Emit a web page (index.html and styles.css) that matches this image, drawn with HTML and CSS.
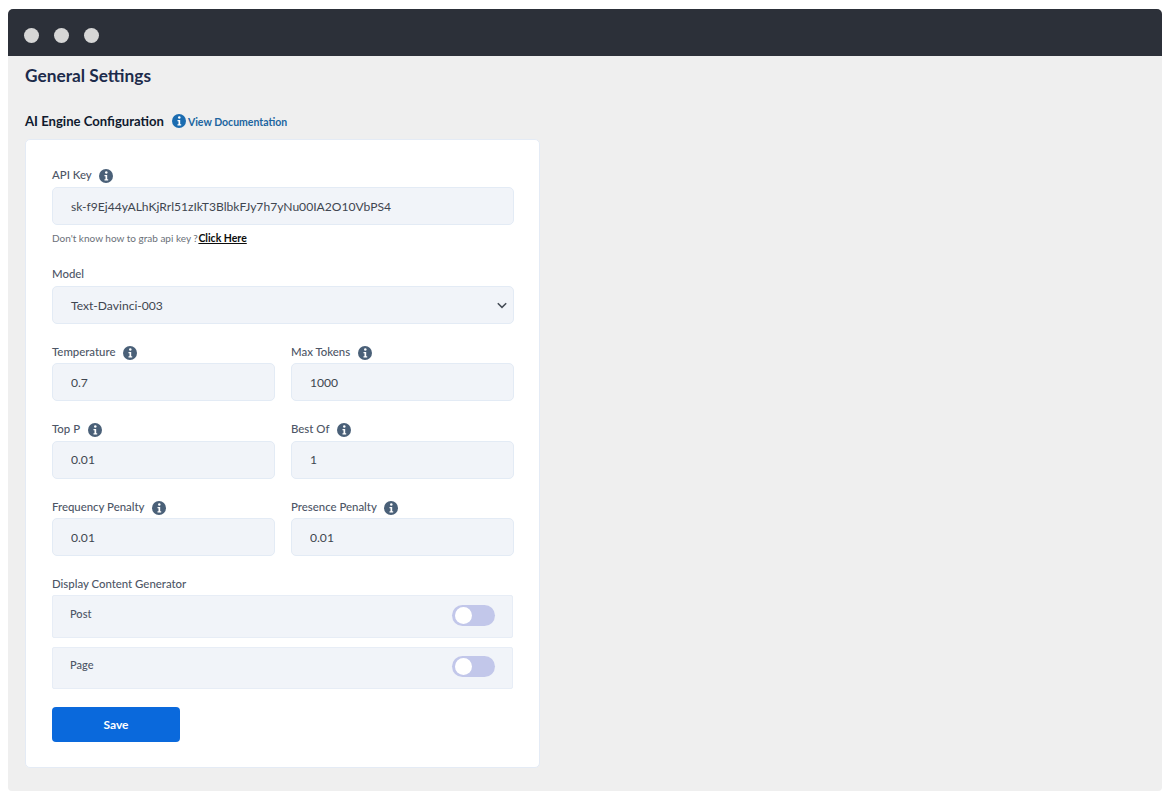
FILE: index.html
```html
<!DOCTYPE html>
<html lang="en">
<head>
<meta charset="utf-8">
<title>General Settings</title>
<link rel="stylesheet" href="styles.css">
</head>
<body>
<svg class="defs" width="0" height="0" aria-hidden="true">
  <symbol id="info" viewBox="0 0 14 14">
    <circle cx="7" cy="7" r="7" fill="currentColor"/>
    <circle cx="7.3" cy="3.6" r="1.25" fill="#fff"/>
    <path d="M5.5 6h2.7v4.2h1v1.2H5.5v-1.2h1V7.2h-1z" fill="#fff"/>
  </symbol>
</svg>
<div class="window">
  <header class="titlebar">
    <span class="dot"></span><span class="dot"></span><span class="dot"></span>
  </header>
  <main class="content">
    <h1 class="page-title">General Settings</h1>
    <div class="section-head">
      <h2 class="section-title">AI Engine Configuration</h2>
      <svg class="doc-icon"><use href="#info"/></svg>
      <a class="doc-link" href="#">View Documentation</a>
    </div>
    <section class="card">
      <div class="field">
        <label class="label">API Key <svg class="tip"><use href="#info"/></svg></label>
        <input class="input" type="text" value="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">
        <p class="help">Don't know how to grab api key ? <a href="#">Click Here</a></p>
      </div>
      <div class="field field-model">
        <label class="label">Model</label>
        <div class="select">
          <span>Text-Davinci-003</span>
          <svg class="chevron" viewBox="0 0 10 7"><path d="M.8 1.2 5 5.4l4.2-4.2" fill="none" stroke="#444b55" stroke-width="1.5"/></svg>
        </div>
      </div>
      <div class="grid">
        <div class="field">
          <label class="label">Temperature <svg class="tip"><use href="#info"/></svg></label>
          <input class="input" type="text" value="0.7">
        </div>
        <div class="field">
          <label class="label">Max Tokens <svg class="tip"><use href="#info"/></svg></label>
          <input class="input" type="text" value="1000">
        </div>
        <div class="field">
          <label class="label">Top P <svg class="tip"><use href="#info"/></svg></label>
          <input class="input" type="text" value="0.01">
        </div>
        <div class="field">
          <label class="label">Best Of <svg class="tip"><use href="#info"/></svg></label>
          <input class="input" type="text" value="1">
        </div>
        <div class="field">
          <label class="label">Frequency Penalty <svg class="tip"><use href="#info"/></svg></label>
          <input class="input" type="text" value="0.01">
        </div>
        <div class="field">
          <label class="label">Presence Penalty <svg class="tip"><use href="#info"/></svg></label>
          <input class="input" type="text" value="0.01">
        </div>
      </div>
      <div class="generator">
        <div class="label">Display Content Generator</div>
        <div class="toggle-row"><span class="toggle-name">Post</span><span class="switch"><span class="knob"></span></span></div>
        <div class="toggle-row"><span class="toggle-name">Page</span><span class="switch"><span class="knob"></span></span></div>
      </div>
      <button class="save" type="button">Save</button>
    </section>
  </main>
</div>
</body>
</html>
```
FILE: styles.css
```css
* { box-sizing: border-box; }
html, body { margin: 0; padding: 0; }
body {
  background: #fff;
  padding: 9px 8px;
  height: 800px;
  overflow: hidden;
  font-family: Lato, "Liberation Sans", sans-serif;
  color: #4d5666;
}
.defs { position: absolute; }
.window {
  height: 782px;
  background: #efefef;
  border-radius: 5px 5px 4px 4px;
  overflow: hidden;
}
.titlebar {
  height: 47px;
  background: #2c3039;
  display: flex;
  align-items: center;
  gap: 15px;
  padding: 5px 16px 0;
}
.dot {
  width: 15px;
  height: 15px;
  border-radius: 50%;
  background: #d6d6d6;
}
.content { padding: 9px 17px 0; }
.page-title {
  margin: 0;
  font-size: 17.3px;
  line-height: 22px;
  font-weight: 700;
  color: #1c2b4b;
}
.section-head {
  display: flex;
  align-items: center;
  height: 20px;
  margin-top: 24px;
}
.section-title {
  margin: 0;
  font-size: 13.1px;
  font-weight: 700;
  color: #0f1a2e;
}
.doc-icon {
  width: 14px;
  height: 14px;
  margin-left: 8px;
  color: #1b6cb0;
}
.doc-link {
  margin-left: 2px;
  font-size: 10.5px;
  font-weight: 700;
  color: #20659f;
  text-decoration: none;
  padding-top: 1px;
}
.card {
  width: 515px;
  height: 629px;
  margin-top: 8px;
  padding: 27px 25px 0 26px;
  background: #fff;
  border: 1px solid #e4ebf5;
  border-radius: 5px;
}
.field { display: flex; flex-direction: column; }
.field-model { margin-top: 22px; }
.label {
  display: flex;
  align-items: center;
  height: 16px;
  margin-bottom: 4px;
  font-size: 11.4px;
  font-weight: 500;
  color: #4d5666;
  white-space: pre;
}
.card > .field > .label { padding-bottom: 1px; }
.tip {
  width: 14px;
  height: 14px;
  margin-left: 5px;
  margin-top: 3px;
  color: #4a6078;
}
.input, .select {
  width: 100%;
  height: 38px;
  padding: 0 18px;
  background: #f1f4f9;
  border: 1px solid #e3ebf5;
  border-radius: 5px;
  font-family: inherit;
  font-size: 12.1px;
  color: #3f4650;
  outline: none;
}
.select {
  display: flex;
  align-items: center;
  justify-content: space-between;
  padding-right: 6px;
}
.chevron { width: 10px; height: 7px; }
.help {
  margin: 7px 0 0;
  font-size: 10px;
  line-height: 12px;
  color: #6a7078;
}
.help a { color: #0c0c0c; font-weight: 700; font-size: 10.5px; margin-left: -2px; }
.grid {
  display: grid;
  grid-template-columns: 223px 223px;
  column-gap: 16px;
  row-gap: 19.5px;
  margin-top: 19px;
}
.generator { margin-top: 19px; }
.generator .label { margin-bottom: 4px; }
.toggle-row {
  width: 461px;
  height: 42.5px;
  margin-bottom: 9px;
  padding: 0 17px 2px 17px;
  display: flex;
  align-items: center;
  justify-content: space-between;
  background: #f1f4f9;
  border: 1px solid #e7edf6;
  border-radius: 2px;
  font-size: 11px;
  font-weight: 500;
  color: #4d5666;
}
.toggle-name { margin-bottom: 4px; }
.switch {
  display: block;
  width: 43px;
  height: 21px;
  padding: 2px 3px;
  border-radius: 11px;
  background: #c2c7ea;
}
.knob {
  display: block;
  width: 17px;
  height: 17px;
  border-radius: 50%;
  background: #fff;
}
.save {
  display: block;
  width: 128px;
  height: 35px;
  margin-top: 18px;
  background: #0a69dc;
  border: 0;
  border-radius: 4px;
  color: #fff;
  font-family: inherit;
  font-size: 12px;
  font-weight: 700;
}
```
